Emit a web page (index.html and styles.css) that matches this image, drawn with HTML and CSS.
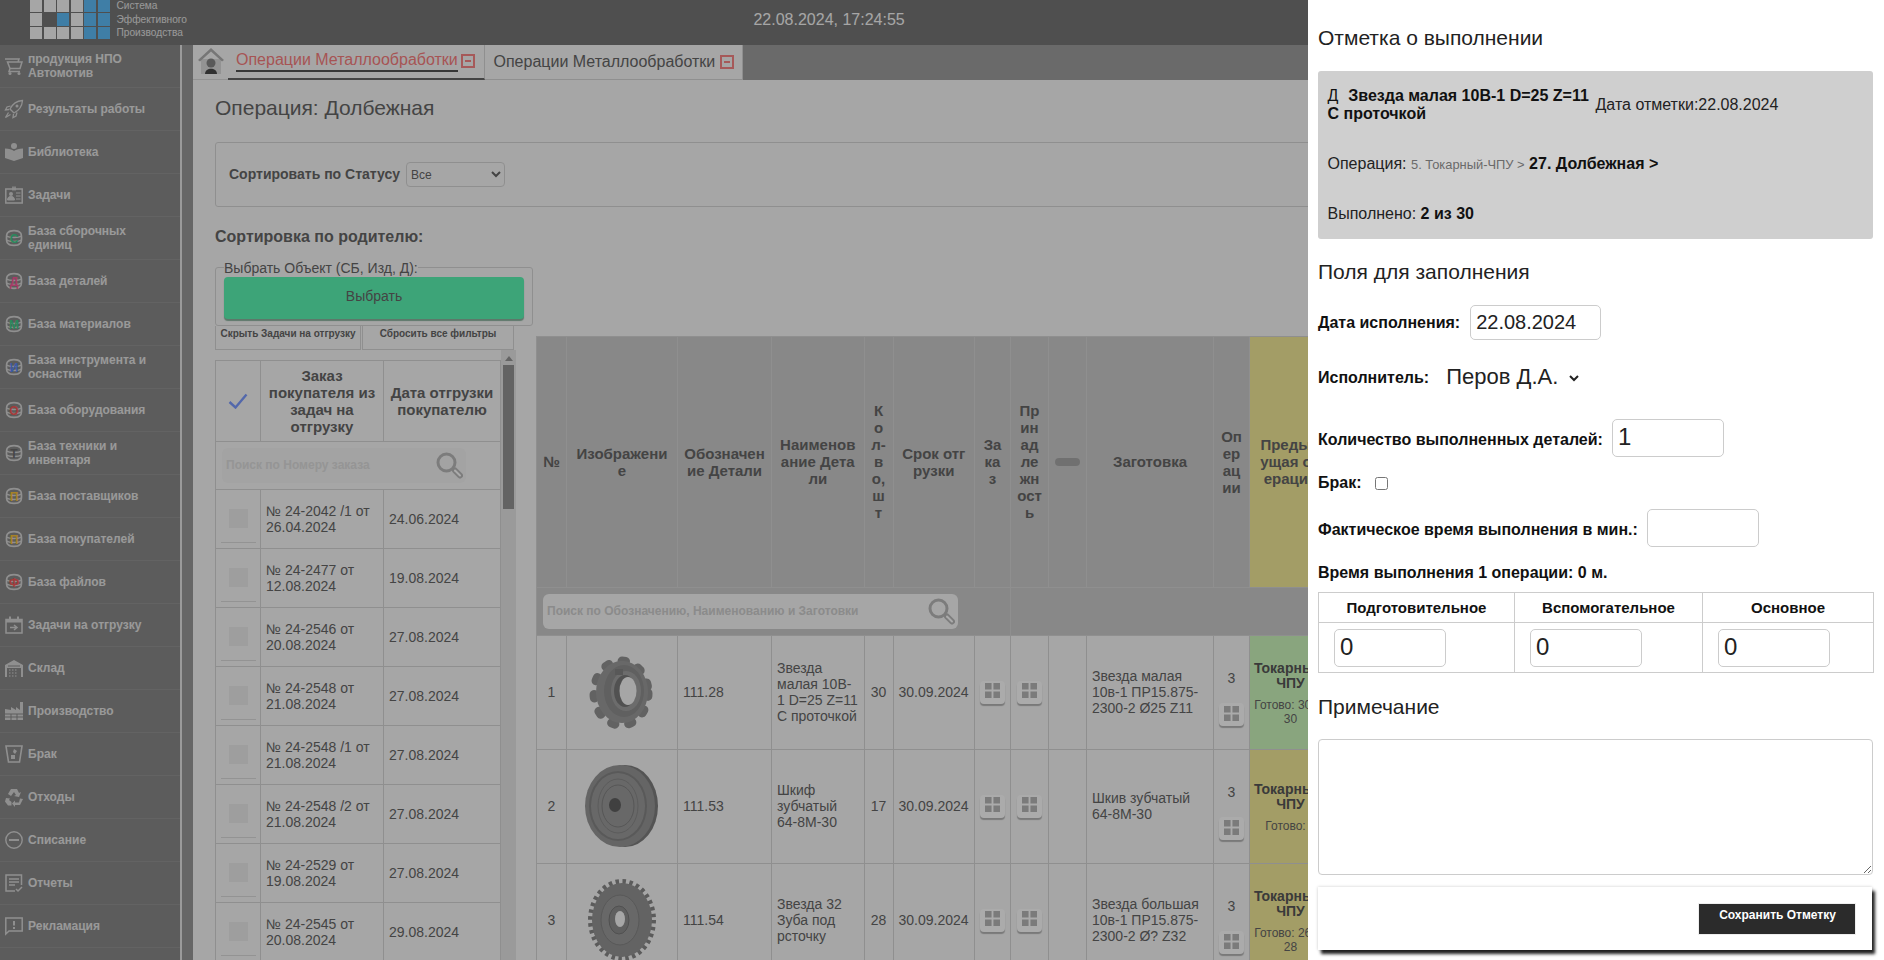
FILE: index.html
```html
<!DOCTYPE html>
<html lang="ru">
<head>
<meta charset="utf-8">
<title>Операции Металлообработки</title>
<link rel="stylesheet" href="styles.css">
</head>
<body>
<svg class="defs" width="0" height="0">
  <symbol id="db" viewBox="0 0 18 18"><path d="M3 3.500C5 1 13 1 15 3.500c2 1 2 10 0 11-2 2.500-10 2.500-12 0-2-1-2-10 0-11z" fill="none" stroke="currentColor" stroke-width="1.700"/><path d="M1.500 7c3 2 12 2 15 0M1.500 11c3 2 12 2 15 0" fill="none" stroke="currentColor" stroke-width="1.300"/></symbol>
  <symbol id="grid" viewBox="0 0 16 16"><path d="M0 0h7v7H0zM9 0h7v7H9zM0 9h7v7H0zM9 9h7v7H9z" fill="currentColor"/></symbol>
  <symbol id="glass" viewBox="0 0 27 27"><circle cx="10.500" cy="10.500" r="8.500" fill="none" stroke="currentColor" stroke-width="3"/><path d="M19 18.500l5 5" stroke="currentColor" stroke-width="6" stroke-linecap="round"/><path d="M19 18.500l5 5" stroke="#fff" stroke-width="2" stroke-linecap="round"/></symbol>
</svg>
<div class="page">
  <header class="topbar">
    <div class="logo">
      <i class="g"></i><i class="g"></i><i class="g"></i><i class="g"></i><i class="b"></i><i class="b"></i>
      <i class="g"></i><i class="e"></i><i class="b"></i><i class="g"></i><i class="b"></i><i class="b"></i>
      <i class="g"></i><i class="g"></i><i class="g"></i><i class="g"></i><i class="b"></i><i class="b"></i>
    </div>
    <div class="logo-text">Система<br>Эффективного<br>Производства</div>
    <div class="clock">22.08.2024, 17:24:55</div>
  </header>
  <div class="main">
    <nav class="sidebar">
      <a class="nav"><svg class="ni" viewBox="0 0 18 18"><path d="M0 2h14l-1 3M2.500 5H17l-2 6.500H5L2.500 5zM5 11.500 4 14.500h11" fill="none" stroke="currentColor" stroke-width="1.500"/><circle cx="5" cy="16.500" r="1.500" fill="currentColor"/><circle cx="14" cy="16.500" r="1.500" fill="currentColor"/></svg><span>продукция НПО Автомотив</span></a>
      <a class="nav"><svg class="ni" viewBox="0 0 18 18"><path d="M17.500.5C11 1 7.500 4 5 9l4 4c5-2.500 8-6 8.500-12.500zM5.500 6 2 7l-1.500 3L4 9.500M12 12.500l-1 3.500-3 1.500.5-3.500M3.500 12.500.5 17.500l5-3" fill="none" stroke="currentColor" stroke-width="1.300"/><circle cx="12" cy="6" r="1.500" fill="currentColor"/></svg><span>Результаты работы</span></a>
      <a class="nav"><svg class="ni" viewBox="0 0 18 18"><circle cx="9" cy="3" r="3" fill="currentColor"/><path d="M0 5.500c4 0 7 1 9 2.500 2-1.500 5-2.500 9-2.500V15l-9 3-9-3z" fill="currentColor"/></svg><span>Библиотека</span></a>
      <a class="nav"><svg class="ni" viewBox="0 0 18 18"><path d="M.8 3h16.400v14H.8z" fill="none" stroke="currentColor" stroke-width="1.500"/><path d="M8 .5v4M10 .5v4" stroke="currentColor" stroke-width="1.500"/><circle cx="6" cy="8" r="2" fill="currentColor"/><path d="M2.500 14c0-5 7-5 7 0zM11 7h4.500M11 10h4.500M11 13h4.500" fill="currentColor" stroke="currentColor"/></svg><span>Задачи</span></a>
      <a class="nav"><svg class="ni" viewBox="0 0 18 18"><use href="#db"/><text class="l lg" x="9" y="13.500">С</text></svg><span>База сборочных единиц</span></a>
      <a class="nav"><svg class="ni" viewBox="0 0 18 18"><use href="#db"/><text class="l lp" x="9" y="13.500">Д</text></svg><span>База деталей</span></a>
      <a class="nav"><svg class="ni" viewBox="0 0 18 18"><use href="#db"/><text class="l lg" x="9" y="13.500">М</text></svg><span>База материалов</span></a>
      <a class="nav"><svg class="ni" viewBox="0 0 18 18"><use href="#db"/><text class="l lb" x="9" y="13.500">И</text></svg><span>База инструмента и оснастки</span></a>
      <a class="nav"><svg class="ni" viewBox="0 0 18 18"><use href="#db"/><text class="l lr" x="9" y="13.500">О</text></svg><span>База оборудования</span></a>
      <a class="nav"><svg class="ni" viewBox="0 0 18 18"><use href="#db"/><text class="l ld" x="9" y="13.500">Т</text></svg><span>База техники и инвентаря</span></a>
      <a class="nav"><svg class="ni" viewBox="0 0 18 18"><use href="#db"/><text class="l ly" x="9" y="13.500">П</text></svg><span>База поставщиков</span></a>
      <a class="nav"><svg class="ni" viewBox="0 0 18 18"><use href="#db"/><text class="l ly" x="9" y="13.500">П</text></svg><span>База покупателей</span></a>
      <a class="nav"><svg class="ni" viewBox="0 0 18 18"><use href="#db"/><text class="l lr" x="9" y="13.500">Ф</text></svg><span>База файлов</span></a>
      <a class="nav"><svg class="ni" viewBox="0 0 18 18"><path d="M1 3.500h16v13.500H1z" fill="none" stroke="currentColor" stroke-width="1.500"/><path d="M1 3h16v3.500H1zM4 .5h2v3H4zM12 .5h2v3h-2z" fill="currentColor"/><path d="M5 11.500h6M9 9l3 2.500L9 14" fill="none" stroke="currentColor" stroke-width="1.500"/></svg><span>Задачи на отгрузку</span></a>
      <a class="nav"><svg class="ni" viewBox="0 0 18 18"><path d="M0 6 9 1l9 5v12h-2V9H2v9H0z" fill="currentColor"/><path d="M3 7h12" stroke="#8a8a8a"/><path d="M4 11h1.500M7 11h1.500M10 11h1.500M4 14h1.500M7 14h1.500M10 14h1.500M4 17h1.500M7 17h1.500M10 17h1.500" stroke="currentColor" stroke-width="1.200"/></svg><span>Склад</span></a>
      <a class="nav"><svg class="ni" viewBox="0 0 18 18"><path d="M0 7v11h18V0h-3v8l-4-3v3L6 5v3z" fill="currentColor"/><path d="M0 12h18M0 15h18M6 12v6M12 12v6" stroke="#8a8a8a"/></svg><span>Производство</span></a>
      <a class="nav"><svg class="ni" viewBox="0 0 18 18"><path d="M1 1h16l-2.500 16h-11z" fill="none" stroke="currentColor" stroke-width="1.600"/><path d="m9 4 3 2-2 3-2-2zM6 10h4v4H6z" fill="currentColor"/></svg><span>Брак</span></a>
      <a class="nav"><svg class="ni" viewBox="0 0 18 18"><path d="M6 1h6l2 4 2-1-2 5-5-1 2-1-2-3-3 4-3-2zM1 10l4 .5-1 1.500 2.500 2v3.500H3l-3-4zM18 11l-3 6h-5v2l-3-3.500 3-3v2h4l1-4z" fill="currentColor"/></svg><span>Отходы</span></a>
      <a class="nav"><svg class="ni" viewBox="0 0 18 18"><circle cx="9" cy="9" r="8.200" fill="none" stroke="currentColor" stroke-width="1.400"/><path d="M4 9h10" stroke="currentColor" stroke-width="2"/></svg><span>Списание</span></a>
      <a class="nav"><svg class="ni" viewBox="0 0 18 18"><path d="M10 17H1V1h15.500v10" fill="none" stroke="currentColor" stroke-width="1.500"/><path d="M4 5h10M4 8h10M4 11h6M11 15l2 2 4-4" fill="none" stroke="currentColor" stroke-width="1.500"/></svg><span>Отчеты</span></a>
      <a class="nav"><svg class="ni" viewBox="0 0 18 18"><path d="M.8 1h16.400v13H4l-3.200 3z" fill="none" stroke="currentColor" stroke-width="1.500"/><path d="M9 4v4.500M9 10v2" stroke="currentColor" stroke-width="2"/></svg><span>Рекламация</span></a>
    </nav>
    <div class="gutter"></div>
    <div class="content">
      <div class="tabs">
        <div class="home">
          <svg viewBox="0 0 26 26" width="26" height="26"><path d="M3 11h20v15H3z" fill="#dcdcdc"/><path d="M0 12 13 0l13 12-2 1.500L13 3.500 2 13.500z" fill="#b0b0b0"/><circle cx="13" cy="15" r="4.500" fill="#868686"/><path d="M7 26c0-7 12-7 12 0z" fill="#4a4a4a"/></svg>
        </div>
        <div class="tab tab-on"><span class="tab-name">Операции Металлообработки</span><span class="tab-x"></span></div>
        <div class="tab"><span>Операции Металлообработки</span><span class="tab-x"></span></div>
        <div class="tab-fill"></div>
      </div>
      <h1 class="title">Операция: Долбежная</h1>
      <div class="filter">
        <label class="filter-label" for="st">Сортировать по Статусу</label>
        <select id="st" class="filter-sel"><option>Все</option></select>
      </div>
      <div class="work">
        <div class="left">
          <h3 class="sub">Сортировка по родителю:</h3>
          <fieldset class="pick">
            <legend>Выбрать Объект (СБ, Изд, Д):</legend>
            <button class="pick-btn" type="button">Выбрать</button>
          </fieldset>
          <div class="mini">
            <div class="mini-b w1">Скрыть Задачи на отгрузку</div>
            <div class="mini-b w2">Сбросить все фильтры</div>
          </div>
          <div class="scroller">
            <table class="lt">
              <colgroup><col class="c1"><col class="c2"><col class="c3"></colgroup>
              <thead>
                <tr class="lt-h">
                  <th><svg class="tick" viewBox="0 0 20 16"><path d="M1.500 9l6 5.500L18.500 1.500" fill="none" stroke="#7d9cff" stroke-width="2.400"/></svg></th>
                  <th>Заказ покупателя из задач на отгрузку</th>
                  <th>Дата отгрузки покупателю</th>
                </tr>
                <tr class="lt-s">
                  <td colspan="3"><div class="search s1"><span>Поиск по Номеру заказа</span><svg class="mag"><use href="#glass"/></svg></div></td>
                </tr>
              </thead>
              <tbody>
                <tr><td><span class="chk"></span></td><td>№ 24-2042 /1 от 26.04.2024</td><td>24.06.2024</td></tr>
                <tr><td><span class="chk"></span></td><td>№ 24-2477 от 12.08.2024</td><td>19.08.2024</td></tr>
                <tr><td><span class="chk"></span></td><td>№ 24-2546 от 20.08.2024</td><td>27.08.2024</td></tr>
                <tr><td><span class="chk"></span></td><td>№ 24-2548 от 21.08.2024</td><td>27.08.2024</td></tr>
                <tr><td><span class="chk"></span></td><td>№ 24-2548 /1 от 21.08.2024</td><td>27.08.2024</td></tr>
                <tr><td><span class="chk"></span></td><td>№ 24-2548 /2 от 21.08.2024</td><td>27.08.2024</td></tr>
                <tr><td><span class="chk"></span></td><td>№ 24-2529 от 19.08.2024</td><td>27.08.2024</td></tr>
                <tr><td><span class="chk"></span></td><td>№ 24-2545 от 20.08.2024</td><td>29.08.2024</td></tr>
              </tbody>
            </table>
            <div class="sbar"><i class="sbar-up"></i><i class="sbar-th"></i></div>
          </div>
        </div>
        <table class="rt">
          <colgroup><col class="r1"><col class="r2"><col class="r3"><col class="r4"><col class="r5"><col class="r6"><col class="r7"><col class="r8"><col class="r9"><col class="r10"><col class="r11"><col class="r12"></colgroup>
          <thead>
            <tr class="rt-h">
              <th>№</th><th>Изображени<br>е</th><th>Обозначен<br>ие Детали</th><th>Наименов<br>ание Дета<br>ли</th><th>К<br>о<br>л-<br>в<br>о,<br>ш<br>т</th><th>Срок отг<br>рузки</th><th>За<br>ка<br>з</th><th>Пр<br>ин<br>ад<br>ле<br>жн<br>ост<br>ь</th><th><span class="pill"></span></th><th>Заготовка</th><th>Оп<br>ер<br>ац<br>ии</th><th class="yel">Предыд<br>ущая оп<br>ерации</th>
            </tr>
            <tr class="rt-s">
              <td colspan="7" class="rs-l"><div class="search s2"><span>Поиск по Обозначению, Наименованию и Заготовки</span><svg class="mag"><use href="#glass"/></svg></div></td>
              <td colspan="5"></td>
            </tr>
          </thead>
          <tbody>
            <tr>
              <td class="ctr">1</td>
              <td class="ctr"><svg class="part" viewBox="0 0 70 80" width="70" height="80"><ellipse cx="34" cy="41" rx="27" ry="32" fill="none" stroke="#939393" stroke-width="9" stroke-dasharray="3.500 14" stroke-linecap="round"/><ellipse cx="35" cy="40" rx="26" ry="31" fill="#9c9c9c"/><ellipse cx="37" cy="39" rx="20" ry="26" fill="#8f8f8f"/><ellipse cx="39" cy="39" rx="15" ry="20" fill="#a2a2a2"/><ellipse cx="38" cy="39" rx="11" ry="16" fill="#7a7a7a"/><ellipse cx="41" cy="39" rx="8.500" ry="14" fill="#f8f8f8"/><path d="M28 17h8v6h-8z" fill="#848484"/></svg></td>
              <td>111.28</td><td class="nm">Звезда<br>малая 10В-<br>1 D=25 Z=11<br>С проточкой</td><td class="ctr">30</td><td class="nw">30.09.2024</td>
              <td class="ctr"><button class="gbtn" type="button"><svg><use href="#grid"/></svg></button></td>
              <td class="ctr"><button class="gbtn" type="button"><svg><use href="#grid"/></svg></button></td>
              <td></td><td>Звезда малая 10в-1 ПР15.875-2300-2 Ø25 Z11</td>
              <td class="ctr ops"><div>3</div><button class="gbtn" type="button"><svg><use href="#grid"/></svg></button></td>
              <td class="grn prev"><b>Токарный-ЧПУ</b><small>Готово: 30 из 30</small></td>
            </tr>
            <tr>
              <td class="ctr">2</td>
              <td class="ctr"><svg class="part" viewBox="0 0 76 84" width="76" height="84"><ellipse cx="41" cy="42" rx="33" ry="41" fill="#7e7e7e"/><ellipse cx="36" cy="42" rx="35" ry="41" fill="#979797"/><ellipse cx="34" cy="42" rx="29" ry="35" fill="#858585"/><ellipse cx="34" cy="42" rx="27" ry="33" fill="#9c9c9c"/><ellipse cx="34" cy="42" rx="16" ry="21" fill="none" stroke="#808080"/><ellipse cx="34" cy="42" rx="20" ry="27" fill="none" stroke="#888"/><ellipse cx="31" cy="41" rx="6" ry="7" fill="#606060"/></svg></td>
              <td>111.53</td><td>Шкиф зубчатый 64-8М-30</td><td class="ctr">17</td><td class="nw">30.09.2024</td>
              <td class="ctr"><button class="gbtn" type="button"><svg><use href="#grid"/></svg></button></td>
              <td class="ctr"><button class="gbtn" type="button"><svg><use href="#grid"/></svg></button></td>
              <td></td><td>Шкив зубчатый 64-8М-30</td>
              <td class="ctr ops"><div>3</div><button class="gbtn" type="button"><svg><use href="#grid"/></svg></button></td>
              <td class="yel prev"><b>Токарный-ЧПУ</b><small>Готово: 0</small></td>
            </tr>
            <tr>
              <td class="ctr">3</td>
              <td class="ctr"><svg class="part" viewBox="0 0 70 84" width="70" height="84"><ellipse cx="35" cy="42" rx="31" ry="38" fill="none" stroke="#888" stroke-width="6" stroke-dasharray="3.400 3.400"/><ellipse cx="35" cy="42" rx="30" ry="37" fill="#949494"/><ellipse cx="33" cy="42" rx="19" ry="25" fill="#9c9c9c" stroke="#848484"/><ellipse cx="32" cy="42" rx="10" ry="14" fill="#8e8e8e" stroke="#787878"/><ellipse cx="33" cy="41" rx="5" ry="8" fill="#f8f8f8"/></svg></td>
              <td>111.54</td><td>Звезда 32 Зуба под рсточку</td><td class="ctr">28</td><td class="nw">30.09.2024</td>
              <td class="ctr"><button class="gbtn" type="button"><svg><use href="#grid"/></svg></button></td>
              <td class="ctr"><button class="gbtn" type="button"><svg><use href="#grid"/></svg></button></td>
              <td></td><td>Звезда большая 10в-1 ПР15.875-2300-2 Ø? Z32</td>
              <td class="ctr ops"><div>3</div><button class="gbtn" type="button"><svg><use href="#grid"/></svg></button></td>
              <td class="yel prev"><b>Токарный-ЧПУ</b><small>Готово: 26 из 28</small></td>
            </tr>
          </tbody>
        </table>
      </div>
    </div>
  </div>
</div>
<div class="veil"></div>
<aside class="panel">
  <h2 class="p-h first">Отметка о выполнении</h2>
  <section class="info">
    <div class="info-top">
      <div class="info-name">Д &nbsp;<b>Звезда малая 10В-1 D=25 Z=11</b><br><b class="nm2">С проточкой</b></div>
      <div>Дата отметки:22.08.2024</div>
    </div>
    <div class="info-line op">Операция: <small>5. Токарный-ЧПУ &gt;</small> <b>27. Долбежная &gt;</b></div>
    <div class="info-line done">Выполнено: <b>2 из 30</b></div>
  </section>
  <h2 class="p-h second">Поля для заполнения</h2>
  <div class="frow f-date"><label>Дата исполнения:</label><input class="inp in-date" value="22.08.2024"></div>
  <div class="frow f-exec"><label>Исполнитель:</label><select class="exec"><option>Перов Д.А.</option></select></div>
  <div class="frow f-qty"><label>Количество выполненных деталей:</label><input class="inp in-num" value="1"></div>
  <div class="frow f-def"><label>Брак:</label><input type="checkbox" class="cb"></div>
  <div class="frow f-time"><label>Фактическое время выполнения в мин.:</label><input class="inp in-num"></div>
  <div class="frow f-sum"><label>Время выполнения 1 операции: 0 м.</label></div>
  <table class="tt">
    <colgroup><col class="t1"><col class="t2"><col class="t3"></colgroup>
    <tr><th>Подготовительное</th><th>Вспомогательное</th><th>Основное</th></tr>
    <tr>
      <td><input class="inp in-num" value="0"></td>
      <td><input class="inp in-num" value="0"></td>
      <td><input class="inp in-num" value="0"></td>
    </tr>
  </table>
  <h2 class="p-h third">Примечание</h2>
  <textarea class="note"></textarea>
  <div class="save-card"><button class="save" type="button">Сохранить Отметку</button></div>
</aside>
</body>
</html>
```

FILE: styles.css
```css
* { box-sizing: border-box; }
html, body { margin: 0; height: 100%; overflow: hidden; }
body { font-family: "Liberation Sans", Arial, sans-serif; font-size: 14px; color: #666; background: #f8f8f8; }
.defs { position: absolute; }
.page { width: 1884px; height: 960px; display: flex; flex-direction: column; overflow: hidden; }

/* top bar */
.topbar { height: 45px; flex: none; background: #767676; display: flex; align-items: flex-start; padding-left: 30px; }
.logo { display: grid; grid-template-columns: repeat(6, 12px); grid-template-rows: 12px 13px 12px; gap: 1px 1.600px; }
.logo .g { background: #f8f8f8; }
.logo .b { background: #5fbdf8; }
.logo-text { margin-left: 6.500px; margin-top: -1px; font-size: 10.200px; line-height: 13.500px; color: #e4e4e4; width: 70px; white-space: nowrap; }
.clock { margin-left: 567px; margin-top: 11px; font-size: 16px; line-height: 18px; color: #f8f8f8; }

.main { flex: 1; display: flex; min-height: 0; }

/* sidebar */
.sidebar { width: 182px; flex: none; background: #8a8a8a; border-right: 2px solid #e6e6e6; }
.nav { height: 43px; display: flex; align-items: center; gap: 5px; padding-left: 5px; border-bottom: 1px solid #949494; color: #e4e4e4; font-size: 12px; font-weight: 700; line-height: 14px; }
.ni { width: 18px; height: 18px; flex: none; color: #d6d6d6; overflow: visible; }
.nav span { display: block; padding-right: 14px; }
.l { font: 700 12px "Liberation Sans", sans-serif; text-anchor: middle; }
.lg { fill: #3fcb89; }
.lp { fill: #f75998; }
.lb { fill: #5a88f8; }
.lr { fill: #f75959; }
.ld { fill: #6a6a6a; }
.ly { fill: #f8c23b; }
.gutter { width: 11px; flex: none; background: #989898; }

/* content */
.content { flex: 1; min-width: 0; overflow: hidden; background: #f8f8f8; }
.tabs { height: 35px; display: flex; }
.home { width: 35px; padding: 3px 0 0 5px; border-bottom: 1px solid #dcdcdc; }
.home svg { display: block; }
.tab { width: 258px; padding: 0 8px 0 8px; display: flex; align-items: center; justify-content: space-between; font-size: 16px; color: #666; border-right: 1px solid #d6d6d6; border-bottom: 1px solid #d6d6d6; }
.tab + .tab { padding-left: 8.500px; }
.tab-on { width: 257px; color: #f87e7e; border-bottom: 2px solid #666; padding-bottom: 1px; padding-right: 9px; }
.tab-name { border-bottom: 2px solid #525252; line-height: 18px; padding-bottom: 1px; }
.tab-x { width: 14px; height: 14px; border: 2px solid #f88585; flex: none; display: flex; align-items: center; justify-content: center; }
.tab-x::after { content: ""; width: 6px; height: 2px; background: #f88585; }
.tab-fill { flex: 1; background: #9e9e9e; }

.title { margin: 15.500px 0 0 22px; font-size: 21px; font-weight: 400; line-height: 23px; color: #666; }
.filter { margin: 23px 0 0 22px; height: 65px; border: 1px solid #d6d6d6; border-radius: 3px; display: flex; align-items: center; gap: 6px; padding-left: 13px; }
.filter-label { font-size: 14px; font-weight: 700; }
.filter-sel { width: 99px; height: 25px; background: #f8f8f8; border: 1px solid #d6d6d6; border-radius: 4px; font: 12px "Liberation Sans", sans-serif; color: #666; padding: 1px 0 0 0; }

.work { display: flex; align-items: flex-start; margin: 21px 0 0 22px; }
.left { width: 318px; flex: none; margin-right: 3px; }
.sub { margin: 0; font-size: 16px; line-height: 18px; font-weight: 700; color: #666; }
.pick { margin: 14px 0 0; width: 318px; height: 66px; padding: 0 8px; border: 1px solid #d6d6d6; border-radius: 3px; }
.pick legend { padding: 0; font-size: 14px; line-height: 16px; }
.pick-btn { display: block; margin-top: 1px; width: 300px; height: 42px; border: 0; border-radius: 4px; background: #5bf5b4; box-shadow: 0 2px 1px #8bb39f; font: 14px "Liberation Sans", sans-serif; color: #666; padding: 0 0 3px; }
.mini { display: flex; gap: 1px; }
.mini-b { height: 24px; border: 1px solid #d6d6d6; border-top: 0; font-size: 10px; font-weight: 700; text-align: center; line-height: 14px; padding-top: 1px; }
.w1 { width: 146px; }
.w2 { width: 152px; }
.scroller { display: flex; align-items: flex-start; }
.lt { margin-top: 10px; width: 285px; flex: none; table-layout: fixed; border-collapse: collapse; }
.c1 { width: 45px; }
.c2 { width: 123px; }
.c3 { width: 117px; }
.lt th, .lt td { border: 1px solid #d6d6d6; padding: 0; }
.lt-h { height: 81px; }
.lt-h th { font-size: 15px; line-height: 17px; font-weight: 700; color: #666; text-align: center; padding: 0 2px; }
.tick { width: 20px; height: 16px; display: block; margin: 0 auto; }
.lt-s { height: 48px; }
.lt tbody tr { height: 59px; }
.lt tbody td { font-size: 14px; line-height: 16px; padding: 0 5px; }
.lt tbody td:first-child { padding: 0; }
.chk { display: block; width: 19px; height: 19px; margin: 0 0 0 13px; background: #ececec; position: relative; }
.chk::after { content: ""; position: absolute; left: -8px; right: -8px; top: 33px; border-top: 1px solid #dcdcdc; }
.search { display: flex; align-items: center; justify-content: space-between; background: #f3f3f3; border-radius: 6px; height: 35px; font-size: 12px; font-weight: 700; color: #dedede; white-space: nowrap; }
.s1 { width: 244px; margin-left: 6px; padding: 0 3px 0 4px; }
.mag { width: 27px; height: 27px; color: #bababa; flex: none; }
.sbar { width: 15px; height: 620px; flex: none; background: #e6e6e6; padding-left: 2px; }
.sbar i { display: block; }
.sbar-up { width: 0; height: 0; margin: 6px 0 4px 2px; border: 4px solid transparent; border-top: 0; border-bottom: 5px solid #969696; }
.sbar-th { width: 11px; height: 144px; background: #949494; }

.rt { margin-top: 108px; width: 795px; flex: none; table-layout: fixed; border-collapse: collapse; }
.r1 { width: 30px; } .r2 { width: 111px; } .r3 { width: 94px; } .r4 { width: 92.500px; }
.r5 { width: 29px; } .r6 { width: 81.500px; } .r7 { width: 36px; } .r8 { width: 38px; }
.r9 { width: 38px; } .r10 { width: 127px; } .r11 { width: 36px; } .r12 { width: 82px; }
.rt th, .rt td { border: 1px solid #d6d6d6; }
.rt-h { height: 251px; background: #cbcbcb; }
.rt-h th { border-color: #d6d6d6; font-size: 15px; line-height: 17px; font-weight: 700; color: #666; text-align: center; padding: 0 2px; white-space: nowrap; }
.rt-h th.yel { background: #f3ea98; }
.pill { display: block; width: 25px; height: 8px; margin: 0 auto; border-radius: 4px; background: #a8a8a8; }
.rt-s { height: 48px; background: #cbcbcb; }
.rs-l { padding: 0; }
.s2 { width: 415px; margin-left: 6px; padding: 0 3px 0 4px; background: #f8f8f8; color: #cfcfcf; }
.rt tbody tr { height: 114px; }
.rt tbody td { font-size: 14px; line-height: 16px; padding: 0 5px; color: #666; }
.rt .ctr { text-align: center; padding: 0; }
.rt .nw { white-space: nowrap; }
.part { display: block; margin: 0 auto; }
.gbtn { display: block; width: 25px; height: 23px; margin: 0 auto; padding: 0 0 3px; border: 0; border-radius: 4px; background: #fff; box-shadow: 0 2px 1px #b5b5b5; color: #b8b8b8; }
.gbtn svg { display: block; width: 15px; height: 15px; margin: 0 auto; }
.rt tbody .ops { padding-top: 12px; }
.ops div { margin-bottom: 17.500px; }
.yel { background: #f3ea98; }
.grn { background: #cdf7bd; }
.rt tbody .prev { text-align: center; padding: 2px 3px 0; }
.prev b { display: block; color: #575757; line-height: 15px; }
.prev small { display: block; margin-top: 7px; font-size: 12px; line-height: 14px; }

/* veil + panel */
.veil { position: fixed; inset: 0; background: rgba(0, 0, 0, .33); }
.panel { position: fixed; top: 0; right: 0; bottom: 0; width: 576px; background: #fff; padding: 0 11px 0 10px; color: #222; overflow: hidden; }
.p-h { margin: 0; font-size: 21px; font-weight: 400; line-height: 24px; color: #222; }
.first { margin-top: 26px; }
.second { margin-top: 21px; }
.third { margin-top: 21.500px; }
.info { margin-top: 21px; height: 168px; background: #cfcfcf; border-radius: 3px; padding: 16px 0 0 9.500px; font-size: 16px; line-height: 18px; color: #222; }
.info-top { display: flex; align-items: center; gap: 6px; }
.info-name { width: 262px; line-height: 17.500px; color: #111; }
.info-name b { margin-left: 1px; }
.info-name .nm2 { margin-left: 0; }
.info b { color: #111; }
.info small { font-size: 12.900px; color: #6a6a6a; }
.op { margin-top: 33px; }
.done { margin-top: 31px; }
.frow { display: flex; align-items: center; }
.frow label { font-size: 16px; line-height: 18px; font-weight: 700; color: #111; white-space: nowrap; }
.f-date { margin-top: 21px; gap: 10px; }
.f-exec { margin-top: 20px; gap: 13px; height: 36px; }
.f-qty { margin-top: 23px; gap: 9px; }
.f-qty label, .f-time label { padding-top: 3px; }
.f-def { margin-top: 17px; gap: 13px; height: 18px; }
.f-time { margin-top: 17px; gap: 9px; }
.f-sum { margin-top: 17px; }
.inp { display: block; height: 38px; background: #fff; border: 1px solid #ccc; border-radius: 5px; font: 24px "Liberation Sans", sans-serif; color: #222; padding: 0 5px 2px; outline: 0; }
.in-date { width: 131px; height: 35px; font-size: 20px; padding: 0 5px; }
.in-num { width: 112px; }
.exec { border: 0; background: #fff; font: 22px "Liberation Sans", sans-serif; color: #222; height: 36px; width: 140px; padding: 0 0 3px; outline: 0; }
.cb { margin: 0; width: 13px; height: 13px; }
.tt { margin-top: 10px; width: 555px; table-layout: fixed; border-collapse: collapse; }
.t1 { width: 196px; } .t2 { width: 188px; } .t3 { width: 171px; }
.tt th, .tt td { border: 1px solid #ccc; padding: 0; }
.tt th { height: 30px; font-size: 15px; font-weight: 700; color: #111; }
.tt td { height: 50px; padding-left: 15px; }
.note { display: block; margin-top: 20px; width: 555px; height: 136px; border: 1px solid #ccc; border-radius: 4px; background: #fff; outline: 0; }
.save-card { margin-top: 12px; width: 554px; height: 63px; background: #fff; box-shadow: 3px 4px 3px #222, 0 0 3px #ccc; display: flex; justify-content: flex-end; padding: 16px 16px 0 0; }
.save { width: 158px; height: 32px; border: 1px solid #eee; background: #2b2b2b; color: #fff; font: 700 12px "Liberation Sans", sans-serif; padding: 0 0 8px 1px; }
```
